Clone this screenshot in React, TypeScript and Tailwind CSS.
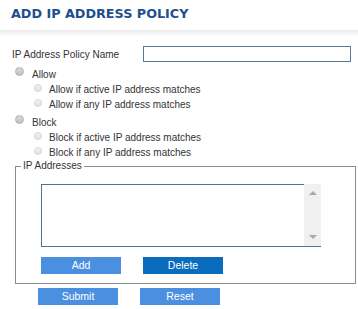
import React from 'react';

function Radio({ sub }: { sub?: boolean }) {
  return sub ? (
    <span className="inline-block w-[8px] h-[8px] rounded-full border border-[#d6d6d6] bg-gradient-to-b from-[#f2f2f2] to-[#e2e2e2] shrink-0" />
  ) : (
    <span className="inline-block w-[9px] h-[9px] rounded-full border border-[#b0b0b0] bg-gradient-to-b from-[#dcdcdc] to-[#c2c2c2] shrink-0" />
  );
}

function Option({ label, sub }: { label: string; sub?: boolean }) {
  return sub ? (
    <div className="flex items-center h-[15px] pl-[34px]">
      <span className="-mt-[2px]"><Radio sub /></span>
      <span className="ml-[7px]">{label}</span>
    </div>
  ) : (
    <div className="flex items-center h-[16px] pl-[15px]">
      <span className="-mt-[3px]"><Radio /></span>
      <span className="ml-[8px]">{label}</span>
    </div>
  );
}

function Btn({ children, dark }: { children: React.ReactNode; dark?: boolean }) {
  return (
    <button
      type="button"
      className={
        'w-[80px] h-[17px] flex items-center justify-center text-white text-[10.5px] leading-none ' +
        (dark ? 'bg-[#0a6cbd]' : 'bg-[#4a8fe0]')
      }
    >
      {children}
    </button>
  );
}

export default function App() {
  return (
    <div className="w-[358px] h-[309px] bg-white overflow-hidden text-[#333] text-[10px] font-['Liberation_Sans',Arial,sans-serif]">
      {/* Title */}
      <div className="h-[30px] pt-[6px] pl-[11px]">
        <h1 className="font-['DejaVu_Sans',Verdana,sans-serif] font-bold text-[12.75px] leading-[16px] text-[#1e4f8c]">
          ADD IP ADDRESS POLICY
        </h1>
      </div>
      <div className="h-[6px] bg-gradient-to-b from-[#e9e9e9] to-white" />

      {/* Name */}
      <div className="flex items-center mt-[10px] h-[16px]">
        <span className="pl-[12px] w-[143px]">IP Address Policy Name</span>
        <input type="text" className="w-[208px] h-[16px] border border-[#58799a] bg-white outline-none" />
      </div>

      {/* Radios */}
      <div className="mt-[4px]">
        <Option label="Allow" />
        <Option sub label="Allow if active IP address matches" />
        <Option sub label="Allow if any IP address matches" />
      </div>
      <div className="mt-[2px]">
        <Option label="Block" />
        <Option sub label="Block if active IP address matches" />
        <Option sub label="Block if any IP address matches" />
      </div>

      {/* IP Addresses */}
      <fieldset className="ml-[15px] w-[341px] border border-[#8c8c8c] pb-[9px]">
        <legend className="ml-[5px] px-[2px] leading-[12px]">IP Addresses</legend>
        <div className="pl-[25px]">
          <div className="mt-[12px] w-[280px] h-[63px] flex border-b border-[#4d7596]">
            <div className="flex-1 border-l border-t border-[#4d7596] bg-white" />
            <div className="w-[17px] bg-[#f0f0f0] flex flex-col items-center justify-between py-[7px]">
              <span className="w-0 h-0 border-l-[4px] border-r-[4px] border-b-[4px] border-l-transparent border-r-transparent border-b-[#a8a8a8]" />
              <span className="w-0 h-0 border-l-[4px] border-r-[4px] border-t-[4px] border-l-transparent border-r-transparent border-t-[#a8a8a8]" />
            </div>
          </div>
          <div className="flex gap-[22px] mt-[10px]">
            <Btn>Add</Btn>
            <Btn dark>Delete</Btn>
          </div>
        </div>
      </fieldset>

      <div className="flex gap-[22px] mt-[4px] pl-[38px]">
        <Btn>Submit</Btn>
        <Btn>Reset</Btn>
      </div>
    </div>
  );
}
